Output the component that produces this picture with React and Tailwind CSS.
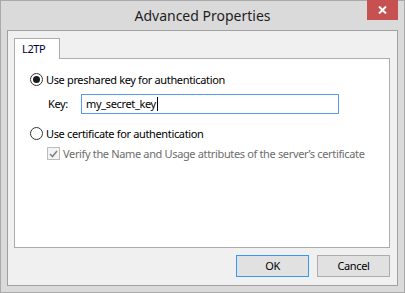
import React from "react";

function Radio({ checked }) {
  return (
    <span className="relative flex h-[13px] w-[13px] shrink-0 items-center justify-center rounded-full border border-[#333333] bg-white">
      {checked && <span className="h-[7px] w-[7px] rounded-full bg-[#1a1a1a]" />}
    </span>
  );
}

export default function App() {
  return (
    <div className="relative flex h-[293px] w-[405px] flex-col border border-[#aaaaaa] bg-[#dadada] font-['Noto_Sans',sans-serif] text-[11px] tracking-[-0.35px] text-black whitespace-nowrap">
      <div className="flex h-[29px] shrink-0 items-center justify-center text-[14px] tracking-normal text-[#1e1e1e]">
        Advanced Properties
      </div>
      <div className="absolute -top-px right-[6px] flex h-[20px] w-[31px] items-center justify-center bg-[#c75050]">
        <svg width="9" height="8" viewBox="0 0 9 8">
          <path d="M1 0.5 L8 7.5 M8 0.5 L1 7.5" stroke="white" strokeWidth="2" />
        </svg>
      </div>
      <div className="mx-[6px] flex h-[256px] shrink-0 flex-col border border-[#a0a0a0] bg-[#f0f0f0] pb-[8px] pl-[6px] pr-[7px] pt-[7px]">
        <div className="flex h-[20px]">
          <div className="relative z-10 flex h-[21px] w-[46px] items-start border border-b-0 border-[#acacac] bg-white pl-[7px] pt-[2px] text-[#000033]">
            L2TP
          </div>
        </div>
        <div className="flex h-[190px] flex-col border border-[#acacac] bg-white pl-[15px] pt-[14px]">
          <div className="flex h-[13px] items-center gap-[3px]">
            <Radio checked />
            <span className="leading-none">Use preshared key for authentication</span>
          </div>
          <div className="mt-[8px] flex h-[20px] items-center pl-[18px]">
            <span className="w-[33px]">Key:</span>
            <div className="flex h-[20px] w-[258px] items-center border border-[#569de5] bg-white pl-[4px]">
              <span>my_secret_key</span>
              <span className="ml-px h-[14px] w-px bg-black" />
            </div>
          </div>
          <div className="mt-[13px] flex h-[13px] items-center gap-[3px]">
            <Radio />
            <span className="leading-none">Use certificate for authentication</span>
          </div>
          <div className="mt-[7px] flex h-[13px] items-center gap-[3px] pl-[17px]">
            <span className="flex h-[13px] w-[13px] shrink-0 items-center justify-center border border-[#bcbcbc] bg-[#f4f4f4]">
              <svg width="9" height="8" viewBox="0 0 9 8">
                <path d="M1 4 L3.5 6.5 L8 1" fill="none" stroke="#838383" strokeWidth="1.6" />
              </svg>
            </span>
            <span className="leading-none text-[#6d6d6d]">
              Verify the Name and Usage attributes of the server’s certificate
            </span>
          </div>
        </div>
        <div className="mt-[7px] flex justify-end gap-[8px]">
          <button className="flex h-[22px] w-[73px] items-center justify-center border border-[#3399ff] bg-[#e1e1e1]">
            OK
          </button>
          <button className="flex h-[22px] w-[73px] items-center justify-center border border-[#adadad] bg-[#e1e1e1]">
            Cancel
          </button>
        </div>
      </div>
    </div>
  );
}
